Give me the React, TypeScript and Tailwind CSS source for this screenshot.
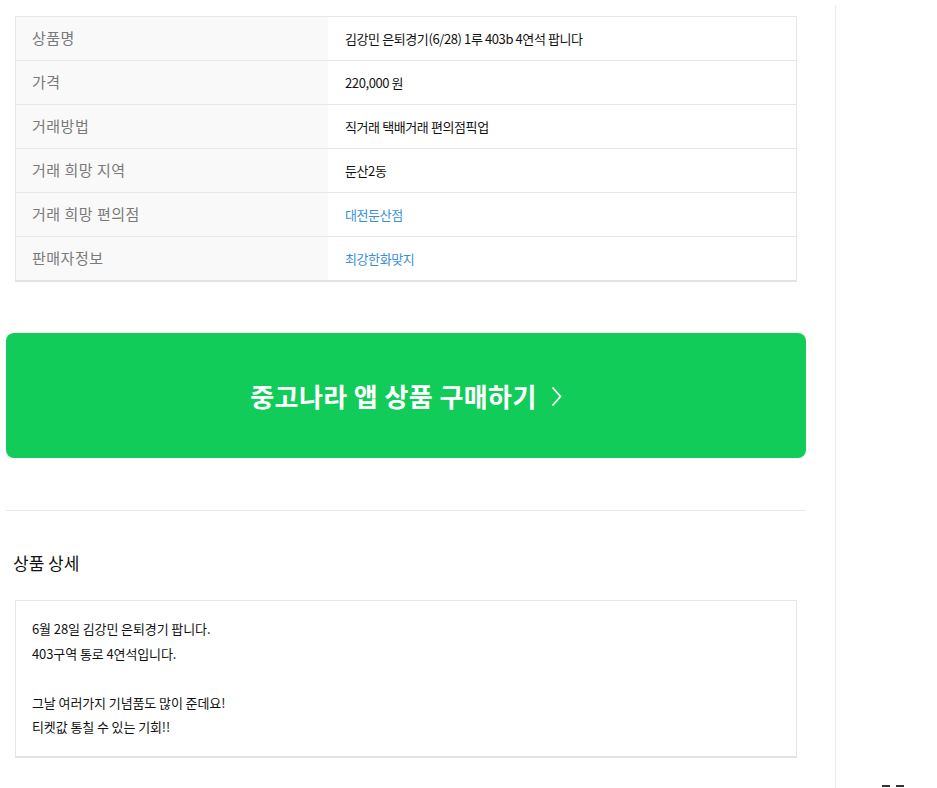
import React from "react";

const font = { fontFamily: '"Noto Sans CJK KR", "Noto Sans", sans-serif' };

const rows: { label: string; value: string; link?: boolean }[] = [
  { label: "상품명", value: "김강민 은퇴경기(6/28) 1루 403b 4연석 팝니다" },
  { label: "가격", value: "220,000 원" },
  { label: "거래방법", value: "직거래 택배거래 편의점픽업" },
  { label: "거래 희망 지역", value: "둔산2동" },
  { label: "거래 희망 편의점", value: "대전둔산점", link: true },
  { label: "판매자정보", value: "최강한화맞지", link: true },
];

export default function App() {
  return (
    <div className="w-[937px] h-[788px] overflow-hidden bg-white flex" style={font}>
      <div className="w-[836px] mt-[5px] border-r border-[#ececec] pt-[11px] shrink-0">
        <div className="ml-[15px] w-[782px] border border-[#e6e6e6] border-b-2 border-b-[#e2e2e2]">
          {rows.map((r, i) => (
            <div
              key={i}
              className={`flex ${i < rows.length - 1 ? "h-[44px] border-b border-[#e6e6e6]" : "h-[43px]"}`}
            >
              <div className="w-[312px] bg-[#f9f9f9] pl-[16px] flex items-center text-[15px] text-[#7a7a7a] tracking-[0.5px] pb-[1px]">
                {r.label}
              </div>
              <div
                className={`flex-1 pl-[17px] flex items-center text-[13px] tracking-[-0.4px] ${
                  r.link ? "text-[#3b8fd8]" : "text-[#111]"
                }`}
              >
                {r.value}
              </div>
            </div>
          ))}
        </div>

        <div className="ml-[6px] mt-[51px] w-[800px] h-[125px] rounded-[8px] bg-[#12cc5a] flex items-center justify-center text-white text-[26px] font-bold tracking-[0.4px]">
          <span>중고나라 앱 상품 구매하기</span>
          <svg className="ml-[14px] mt-[1px]" width="11" height="21" viewBox="0 0 11 21" fill="none">
            <path d="M1.5 1.5 L9.5 10.5 L1.5 19.5" stroke="white" strokeWidth="1.8" />
          </svg>
        </div>

        <div className="ml-[6px] mt-[52px] w-[800px] border-t border-[#e8e8e8]" />

        <div className="ml-[13px] mt-[40px] text-[17px] text-[#111] leading-[24px]">
          상품 상세
        </div>

        <div className="ml-[15px] mt-[25px] w-[782px] h-[158px] border border-[#e6e6e6] border-b-2 border-b-[#e2e2e2] pl-[16px] pt-[16px] text-[13px] text-[#111] leading-[24.5px] tracking-[-0.1px]">
          <div>6월 28일 김강민 은퇴경기 팝니다.</div>
          <div>403구역 통로 4연석입니다.</div>
          <div>&nbsp;</div>
          <div>그날 여러가지 기념품도 많이 준데요!</div>
          <div>티켓값 통칠 수 있는 기회!!</div>
        </div>
      </div>
      <div className="flex-1 relative">
        <div className="absolute left-[46px] top-[785px] flex gap-[6px]">
          <div className="w-[8px] h-[2px] bg-[#333]" />
          <div className="w-[8px] h-[2px] bg-[#333]" />
        </div>
      </div>
    </div>
  );
}
